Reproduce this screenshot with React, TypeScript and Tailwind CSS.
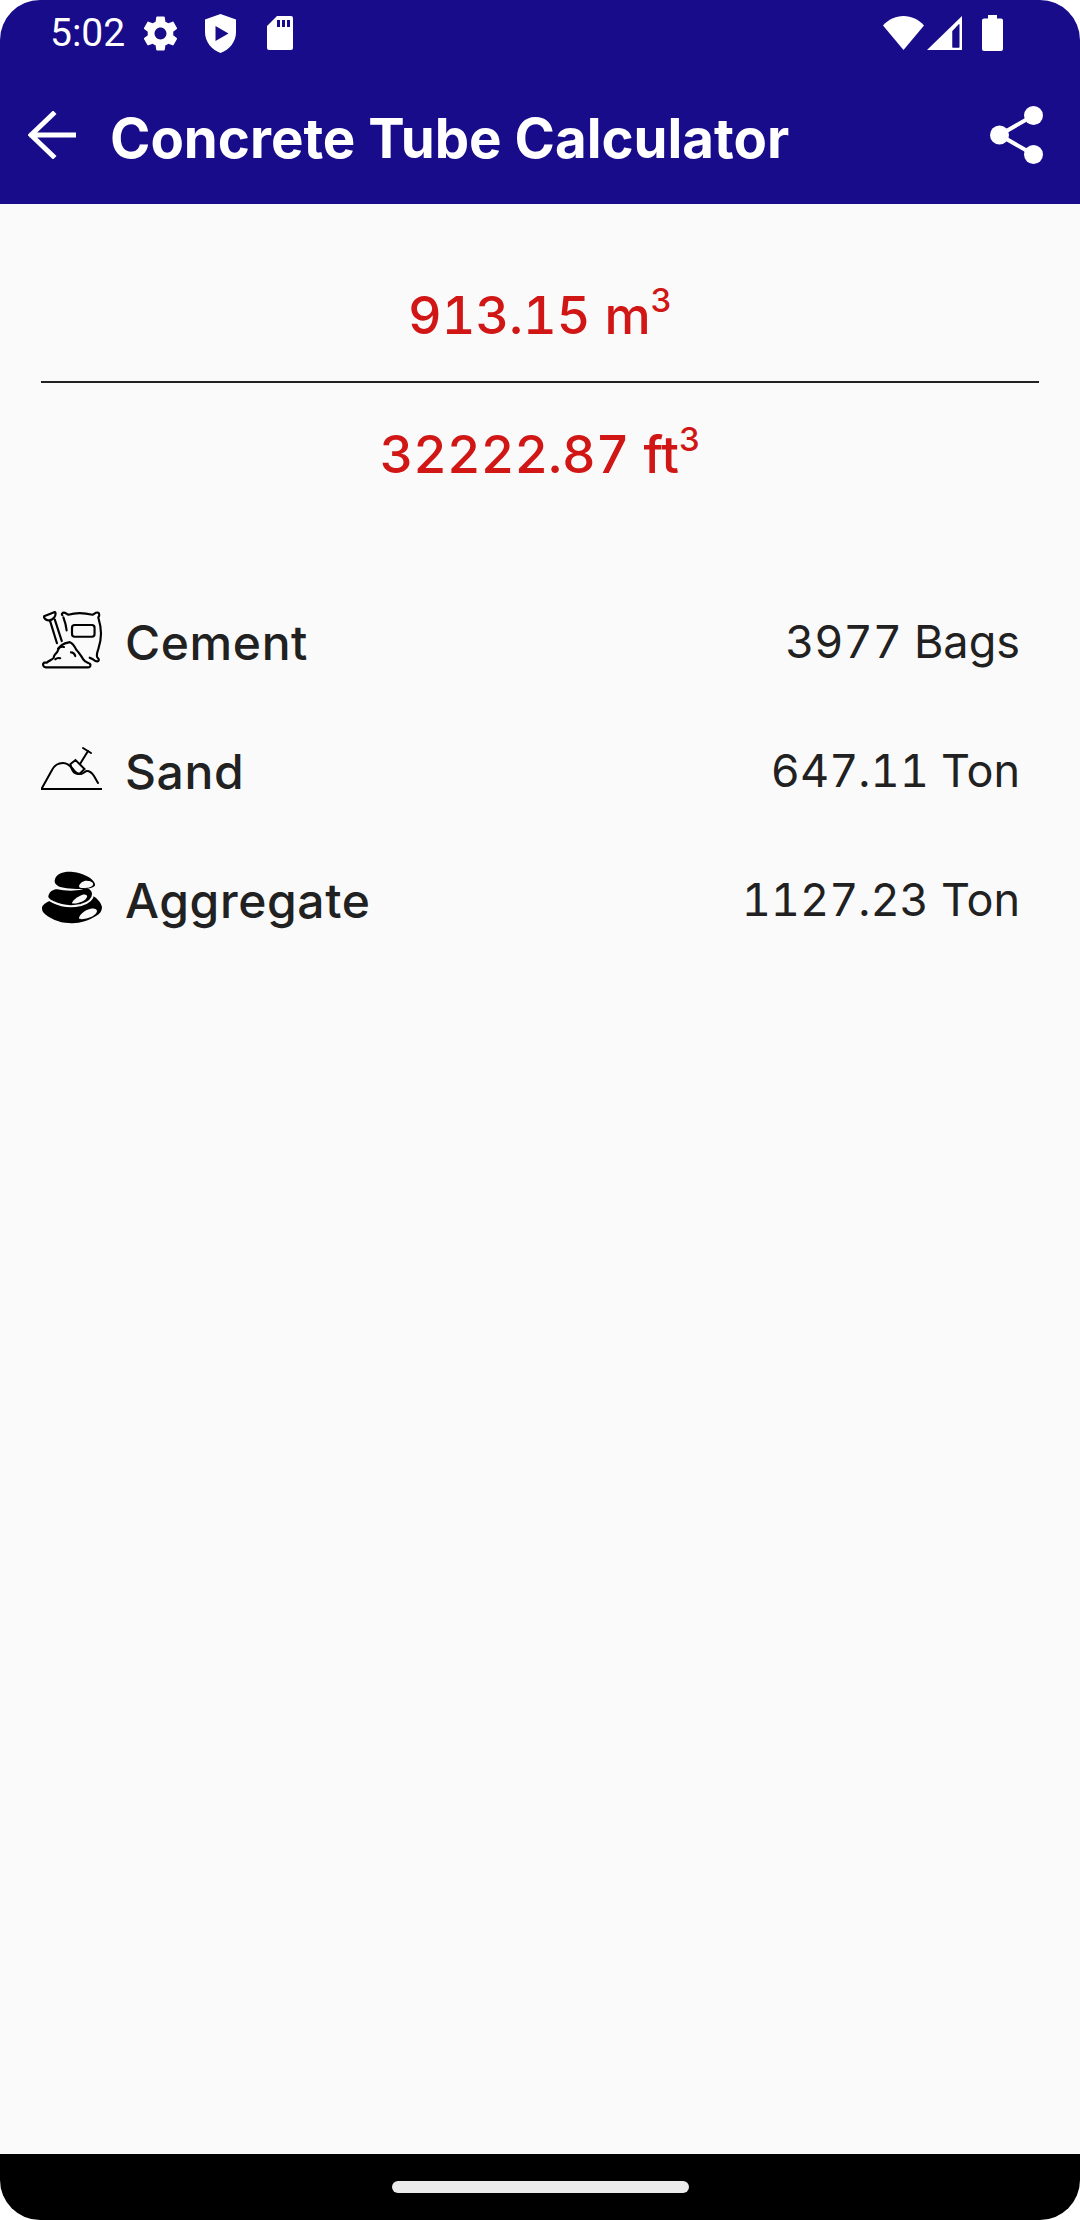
import React from "react";

function StatusIcons() {
  return (
    <div className="flex items-center">
      <svg width="41" height="41" viewBox="0 0 24 24" className="ml-[15px]" fill="#fff">
        <path d="M19.43 12.98c.04-.32.07-.64.07-.98s-.03-.66-.07-.98l2.11-1.65c.19-.15.24-.42.12-.64l-2-3.46c-.12-.22-.39-.3-.61-.22l-2.49 1c-.52-.4-1.08-.73-1.69-.98l-.38-2.65C14.46 2.18 14.25 2 14 2h-4c-.25 0-.46.18-.49.42l-.38 2.65c-.61.25-1.17.59-1.69.98l-2.49-1c-.23-.09-.49 0-.61.22l-2 3.46c-.13.22-.07.49.12.64l2.11 1.65c-.04.32-.07.65-.07.98s.03.66.07.98l-2.11 1.65c-.19.15-.24.42-.12.64l2 3.46c.12.22.39.3.61.22l2.49-1c.52.4 1.08.73 1.69.98l.38 2.65c.03.24.24.42.49.42h4c.25 0 .46-.18.49-.42l.38-2.65c.61-.25 1.17-.59 1.69-.98l2.49 1c.23.09.49 0 .61-.22l2-3.46c.12-.22.07-.49-.12-.64l-2.11-1.65zM12 15.500c-1.93 0-3.500-1.570-3.500-3.500s1.570-3.500 3.500-3.500 3.500 1.570 3.500 3.500-1.570 3.500-3.500 3.500z" />
      </svg>
      <svg width="31" height="39" viewBox="0 0 31 39" className="ml-[24px]" fill="#fff">
        <path fillRule="evenodd" d="M15.500 0 31 5.500V18c0 10-6.500 17.500-15.500 21C6.500 35.500 0 28 0 18V5.500zM10.500 12v15l13-7.500z" />
      </svg>
      <svg width="26" height="34" viewBox="0 0 26 34" className="ml-[31px]" fill="#fff">
        <path fillRule="evenodd" d="M10 0h14a2 2 0 0 1 2 2v30a2 2 0 0 1-2 2H2a2 2 0 0 1-2-2V10zM10 4v7h3V4zM15 4v7h3V4zM20 4v7h3V4z" />
      </svg>
    </div>
  );
}

function SystemIcons() {
  return (
    <div className="flex items-center">
      <svg width="41" height="34" viewBox="0 0 41 34" fill="#fff">
        <path d="M0 9.500C5.500 3.500 12.500 0 20.500 0S35.500 3.500 41 9.500L20.500 34z" />
      </svg>
      <svg width="35" height="34" viewBox="0 0 35 34" className="ml-[3px]" fill="#fff">
        <path fillRule="evenodd" d="M35 0v34H0zM32.500 8l-7 7v16.500h7z" />
        <path d="M32 31.500h-6.500V15l6.500-7z" fill="#180c8a" />
      </svg>
      <svg width="21" height="36" viewBox="0 0 21 36" className="ml-[20px]" fill="#fff">
        <path d="M6 0h9v3.500h4a2 2 0 0 1 2 2V34a2 2 0 0 1-2 2H2a2 2 0 0 1-2-2V5.500a2 2 0 0 1 2-2h4z" />
      </svg>
    </div>
  );
}

function CementIcon() {
  return (
    <svg width="62" height="58" viewBox="0 0 56 54" fill="none" stroke="#000" strokeWidth="2" strokeLinecap="round" strokeLinejoin="round">
      <path d="M2 5 12 1c1 0 1 3-.500 5C10 8 7 9 5 8.500 3 8 1.500 6 2 5z" />
      <path d="M7.500 9 14 30M12 8l6.500 20" />
      <path d="M19 4c-1-1 0-2.500 1.500-2.500s2.500 1.500 4 2C31 1.500 39 1.500 47 3.500c1.500-.5 3-2.500 5-2 2 .5 1.500 3 .5 4.500 1.500 5 2.500 10 2.500 15s-1 10-2.500 14.500c-1 3-2 5-1 7.500 1 1 2 2.500 1 3.500s-3 0-5-1.500l-3-1.500" />
      <path d="M20 6c1.500 4 2.500 7 3 12" />
      <rect x="28" y="13" width="21" height="11" rx="2.500" />
      <path d="M2 48c-2 1.500-.5 4.500 1.500 4.500H43c2 0 3-2 1.500-3.500-2-1-4.500-1.500-6-4-2-3-3.500-6-6.500-9-1.500-3-3-6-6-7-3 .5-6 1.500-8 3-2.500 1.500-2.500 4-4 6.500-1 1-3 3-3 5-1 1.500-4 2.500-6.500 4.500z" />
      <path d="M15 35c1.500-1.500 3.500-2 5.500-1.500M31 42c-.5-2-2-3.500-4-3.500M12.500 45c1-1 3-1.500 4.500-1" />
    </svg>
  );
}

function SandIcon() {
  return (
    <svg width="62" height="46" viewBox="0 0 62 46" fill="none" stroke="#000" strokeWidth="2" strokeLinecap="round">
      <path d="M0 43h61" strokeLinecap="butt" />
      <path d="M1 42 11 24c2-4 6-7 11-7 5 0 7 3 10 6 2 3 5 5 8 5 3-.5 4-3 6-3 3 0 5 2 7 5l4 7" />
      <path d="m29.500 18 5-4 9 9-4.500 4.500c-2 1-4 .5-6-1-2-2-3-4-3.500-8.500z" />
      <path d="M39 18 47 5" />
      <path d="m42 2 8 5" />
    </svg>
  );
}

function AggregateIcon() {
  return (
    <svg width="62" height="53" viewBox="0 0 62 53">
      <path d="M1 36c2-4 8-7 14-8 8 4 20 6 29 1 3-1 5-3 6-5 5 2 10 7 11 12 0 4-2 7-6 9-8 5-18 8-27 7C18 52 7 47 2 41c-1-2-1-3-1-5z" fill="#000" />
      <path d="M38 47c1-4 6-8 11-9 4-1 7 0 7 2 0 3-5 6-9 7-3 1-9 2-9 0z" fill="#fafafa" />
      <path d="M15 17c9 2 20 3 31-1 3 1 6 3 6 7 0 5-5 9-12 11-9 2-20 1-28-3-5-2-7-5-5-8 1-3 4-5 8-6z" fill="#000" stroke="#fafafa" strokeWidth="2" />
      <path d="M31 32c1-3 5-6 10-8 3-1 6 0 5 2-1 3-5 5-9 6-2 .5-6 1-6 0z" fill="#fafafa" />
      <path d="M14 8c2-6 10-8 18-7 10 1 20 6 22 12 1 4-7 5-15 5-9 0-19-1-22-3-3-2-4-4-3-7z" fill="#000" />
      <path d="M38 15c1-3 5-6 9-5 3 0 6 2 5 4-2 3-7 3-10 3-2 0-4 0-4-2z" fill="#fafafa" />
    </svg>
  );
}

function MaterialRow({ icon, label, value, className }: { icon: React.ReactNode; label: string; value: string; className: string }) {
  return (
    <div className={`flex items-center justify-between ${className}`}>
      <div className="flex items-center">
        <div className="flex h-[62px] w-[84px] items-center pb-[7px]">{icon}</div>
        <span className="text-[48px] leading-[62px] font-medium tracking-[0.6px] text-[#212121]">{label}</span>
      </div>
      <span className="mb-[2px] text-[45px] leading-[60px] text-[#212121] tabular-nums">{value}</span>
    </div>
  );
}

export default function App() {
  return (
    <div className="flex h-[2220px] w-[1080px] flex-col overflow-hidden bg-white font-['Inter',sans-serif]">
      <header className="h-[204px] shrink-0 rounded-t-[40px] bg-[#180c8a] text-white">
        <div className="flex h-[66px] items-center justify-between pr-[77px] pl-[50px]">
          <div className="flex items-center">
            <span className="font-['Roboto',sans-serif] text-[39px] leading-[44px]">5:02</span>
            <StatusIcons />
          </div>
          <SystemIcons />
        </div>
        <div className="flex h-[138px] items-center justify-between pr-[37px] pl-[28px]">
          <div className="flex items-center">
            <svg width="48" height="48" viewBox="0 0 48 48" fill="none" stroke="#fff" strokeWidth="5" strokeLinecap="square">
              <path d="M46 24H4M25 3 3 24l22 21" />
            </svg>
            <h1 className="mt-[6px] ml-[34px] text-[54.6px] leading-[64px] font-bold">Concrete Tube Calculator</h1>
          </div>
          <svg width="53" height="58" viewBox="0 0 53 58" fill="#fff">
            <circle cx="43.500" cy="9.500" r="9.500" />
            <circle cx="9.500" cy="29" r="9.500" />
            <circle cx="43.500" cy="48.500" r="9.500" />
            <path d="M9.500 29 43.500 9.500M9.500 29l34 19.500" stroke="#fff" strokeWidth="4" />
          </svg>
        </div>
      </header>

      <main className="flex-1 bg-[#fafafa] pt-[80px]">
        <div className="mx-[41px]">
          <p className="h-[97px] text-center text-[52px] leading-[64px] font-medium text-[#d01716] tabular-nums">
            913.15 m<sup className="top-[-22px] text-[33px]">3</sup>
          </p>
          <div className="h-[2px] bg-[#212121]" />
          <p className="mt-[40px] text-center text-[52px] leading-[64px] font-medium text-[#d01716] tabular-nums">
            32222.87 ft<sup className="top-[-22px] text-[33px]">3</sup>
          </p>
        </div>
        <div className="mt-[125px] pr-[60px] pl-[41px]">
          <MaterialRow icon={<CementIcon />} label="Cement" value="3977 Bags" className="" />
          <MaterialRow icon={<SandIcon />} label="Sand" value="647.11 Ton" className="mt-[67px]" />
          <MaterialRow icon={<AggregateIcon />} label="Aggregate" value="1127.23 Ton" className="mt-[67px]" />
        </div>
      </main>

      <footer className="flex h-[66px] shrink-0 items-start justify-center rounded-b-[40px] bg-black pt-[27px]">
        <div className="h-[12px] w-[297px] rounded-full bg-[#ebebeb]" />
      </footer>
    </div>
  );
}
